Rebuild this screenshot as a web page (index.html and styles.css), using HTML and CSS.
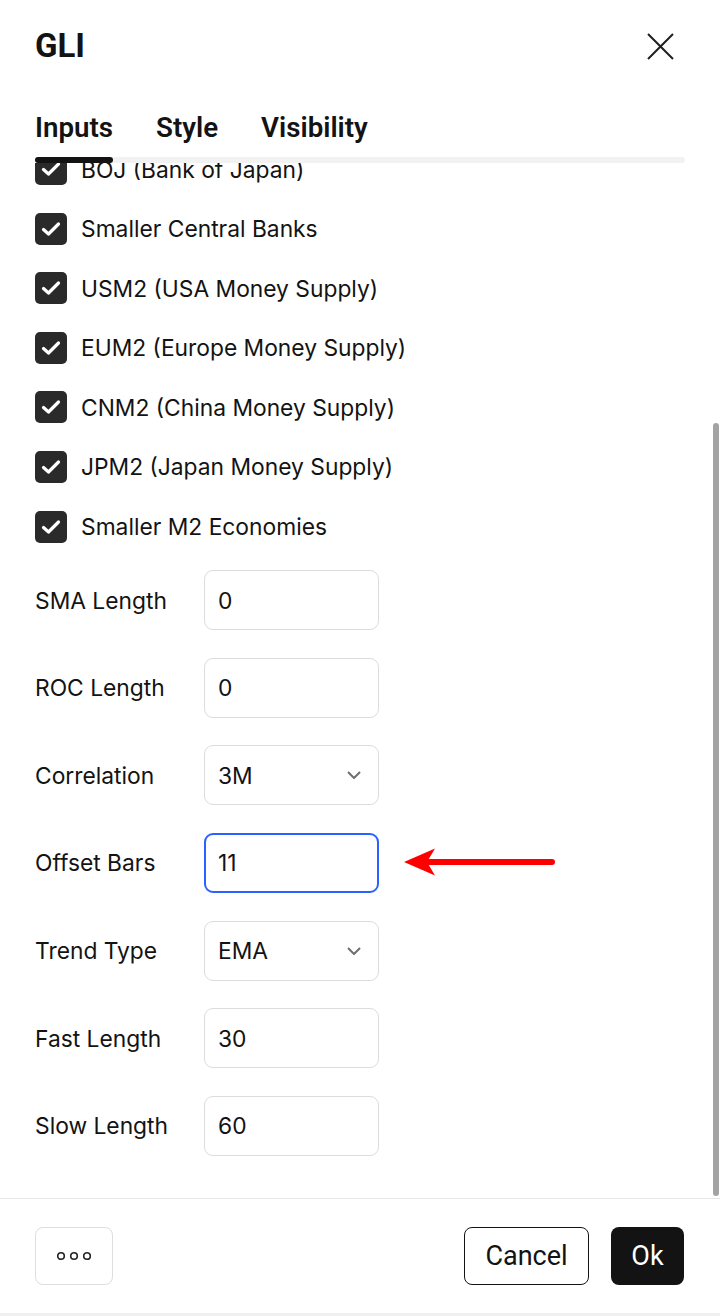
FILE: index.html
```html
<!DOCTYPE html>
<html lang="en">
<head>
    <meta charset="UTF-8">
    <meta name="viewport" content="width=device-width, initial-scale=1.0">
    <title>GLI settings</title>
    <link rel="stylesheet" href="styles.css">
</head>
<body>

<div class="dialog">
    <div class="title-row">
        <h1 class="title">GLI</h1>
        <button class="close" aria-label="Close">
            <svg width="27" height="27" viewBox="0 0 27 27">
                <path d="M1 1 L26 26 M26 1 L1 26" stroke="#1f1f1f" stroke-width="2" fill="none"/>
            </svg>
        </button>
    </div>

    <div class="tabs">
        <div class="tab active">Inputs</div>
        <div class="tab">Style</div>
        <div class="tab">Visibility</div>
    </div>
    <div class="tab-track">
        <div class="tab-indicator"></div>
    </div>

    <div class="scroll-wrap">
        <div class="scroll" id="inputsScroll">
            <div class="fields">
                <label class="check-row"><span class="check"><svg width="32" height="32" viewBox="0 0 32 32"><path d="M8.5 16.5 L13.5 21 L23.5 11" /></svg></span>BOJ (Bank of Japan)</label>
                <label class="check-row"><span class="check"><svg width="32" height="32" viewBox="0 0 32 32"><path d="M8.5 16.5 L13.5 21 L23.5 11" /></svg></span>Smaller Central Banks</label>
                <label class="check-row"><span class="check"><svg width="32" height="32" viewBox="0 0 32 32"><path d="M8.5 16.5 L13.5 21 L23.5 11" /></svg></span>USM2 (USA Money Supply)</label>
                <label class="check-row"><span class="check"><svg width="32" height="32" viewBox="0 0 32 32"><path d="M8.5 16.5 L13.5 21 L23.5 11" /></svg></span>EUM2 (Europe Money Supply)</label>
                <label class="check-row"><span class="check"><svg width="32" height="32" viewBox="0 0 32 32"><path d="M8.5 16.5 L13.5 21 L23.5 11" /></svg></span>CNM2 (China Money Supply)</label>
                <label class="check-row"><span class="check"><svg width="32" height="32" viewBox="0 0 32 32"><path d="M8.5 16.5 L13.5 21 L23.5 11" /></svg></span>JPM2 (Japan Money Supply)</label>
                <label class="check-row"><span class="check"><svg width="32" height="32" viewBox="0 0 32 32"><path d="M8.5 16.5 L13.5 21 L23.5 11" /></svg></span>Smaller M2 Economies</label>

                <div class="field-row">
                    <span class="field-label">SMA Length</span>
                    <input class="field" type="text" value="0">
                </div>
                <div class="field-row">
                    <span class="field-label">ROC Length</span>
                    <input class="field" type="text" value="0">
                </div>
                <div class="field-row">
                    <span class="field-label">Correlation</span>
                    <button class="field select">
                        <span>3M</span>
                        <svg width="14" height="8" viewBox="0 0 14 8"><path d="M1 1 L7 7 L13 1" /></svg>
                    </button>
                </div>
                <div class="field-row">
                    <span class="field-label">Offset Bars</span>
                    <input class="field focused" type="text" value="11">
                    <svg class="pointer" width="152" height="30" viewBox="0 0 152 30">
                        <path d="M24 15 L148 15" stroke="#ff0000" stroke-width="6" stroke-linecap="round"/>
                        <polygon points="0,15 31,1.5 23,15 31,28.5" fill="#ff0000"/>
                    </svg>
                </div>
                <div class="field-row">
                    <span class="field-label">Trend Type</span>
                    <button class="field select">
                        <span>EMA</span>
                        <svg width="14" height="8" viewBox="0 0 14 8"><path d="M1 1 L7 7 L13 1" /></svg>
                    </button>
                </div>
                <div class="field-row">
                    <span class="field-label">Fast Length</span>
                    <input class="field" type="text" value="30">
                </div>
                <div class="field-row">
                    <span class="field-label">Slow Length</span>
                    <input class="field" type="text" value="60">
                </div>
            </div>
        </div>
        <div class="thumb"></div>
    </div>

    <div class="footer">
        <button class="btn more" aria-label="More">
            <svg width="34" height="10" viewBox="0 0 34 10">
                <circle cx="4" cy="5" r="3.3"/>
                <circle cx="17" cy="5" r="3.3"/>
                <circle cx="30" cy="5" r="3.3"/>
            </svg>
        </button>
        <div class="actions">
            <button class="btn cancel">Cancel</button>
            <button class="btn ok">Ok</button>
        </div>
    </div>
</div>

<script>
    // inputs tab opens scrolled to the end of the list
    const scroller = document.getElementById('inputsScroll');
    scroller.scrollTop = scroller.scrollHeight;
</script>

</body>
</html>
```

FILE: styles.css
```css
body {
    margin: 0;
    padding: 0;
    background-color: #f0f0f0;
    font-family: Inter, "Noto Sans", sans-serif;
    color: #131313;
}
.dialog {
    background: #fff;
    height: 1313px;
    display: flex;
    flex-direction: column;
}
.title-row {
    display: flex;
    justify-content: space-between;
    align-items: center;
    padding: 26px 35px 0 35px;
}
.title {
    margin: 0;
    font-family: Roboto, "Liberation Sans", sans-serif;
    font-weight: 700;
    font-size: 33px;
    line-height: 40px;
}
.close {
    background: none;
    border: none;
    padding: 0;
    margin-right: 11px;
    display: flex;
}
.tabs {
    display: flex;
    gap: 43px;
    margin: 46px 35px 0 35px;
}
.tab {
    font-family: Roboto, "Liberation Sans", sans-serif;
    font-weight: 600;
    font-size: 27.7px;
    line-height: 32px;
    padding-bottom: 13px;
    color: #131313;
}
.tab-track {
    margin: 0 35px;
    height: 6px;
    border-radius: 3px;
    background: #f2f2f2;
}
.tab-indicator {
    width: 78px;
    height: 100%;
    border-radius: 3px;
    background: #131313;
}
.scroll-wrap {
    flex: 1;
    min-height: 0;
    position: relative;
}
.scroll {
    height: 100%;
    overflow-y: auto;
    scrollbar-width: none;
}
.scroll::-webkit-scrollbar {
    display: none;
}
.thumb {
    position: absolute;
    right: 1px;
    top: 260px;
    bottom: 2px;
    width: 6px;
    border-radius: 3px;
    background: #a3a3a3;
}
.fields {
    display: flex;
    flex-direction: column;
    gap: 27.6px;
    padding: 0 35px 42px 35px;
}
.check-row {
    display: flex;
    align-items: center;
    gap: 14px;
    height: 32px;
    font-size: 22.8px;
}
.check {
    width: 32px;
    height: 32px;
    border-radius: 5px;
    background: #2a2a2a;
    display: flex;
}
.check path {
    fill: none;
    stroke: #fff;
    stroke-width: 3.2;
    stroke-linecap: round;
    stroke-linejoin: round;
}
.field-row {
    display: flex;
    align-items: center;
    height: 60px;
}
.field-label {
    width: 169px;
    font-size: 22.8px;
}
.field {
    box-sizing: border-box;
    width: 175px;
    height: 60px;
    padding: 0 13px;
    border: 1px solid #dcdcdc;
    border-radius: 9px;
    background: #fff;
    font-family: Inter, "Noto Sans", sans-serif;
    font-size: 22.8px;
    color: #131313;
    outline: none;
}
.field.focused {
    border: 2px solid #2962ff;
    padding: 0 12px;
}
.select {
    display: flex;
    align-items: center;
    justify-content: space-between;
    padding-right: 17px;
    text-align: left;
}
.select path {
    fill: none;
    stroke: #6e6e6e;
    stroke-width: 2;
}
.pointer {
    margin-left: 25px;
    margin-top: -2px;
}
.footer {
    border-top: 1px solid #e6e6e6;
    padding: 28px 36px 28px 35px;
    display: flex;
    justify-content: space-between;
}
.actions {
    display: flex;
    gap: 22px;
}
.btn {
    box-sizing: border-box;
    height: 58px;
    border-radius: 8px;
    font-family: Roboto, "Liberation Sans", sans-serif;
    font-size: 27px;
    cursor: pointer;
}
.more {
    width: 78px;
    background: #fff;
    border: 1px solid #dedede;
    display: flex;
    align-items: center;
    justify-content: center;
}
.more circle {
    fill: none;
    stroke: #222;
    stroke-width: 1.6;
}
.cancel {
    width: 125px;
    background: #fff;
    border: 1px solid #131313;
    color: #131313;
}
.ok {
    width: 73px;
    background: #131313;
    border: none;
    color: #fff;
}
```
